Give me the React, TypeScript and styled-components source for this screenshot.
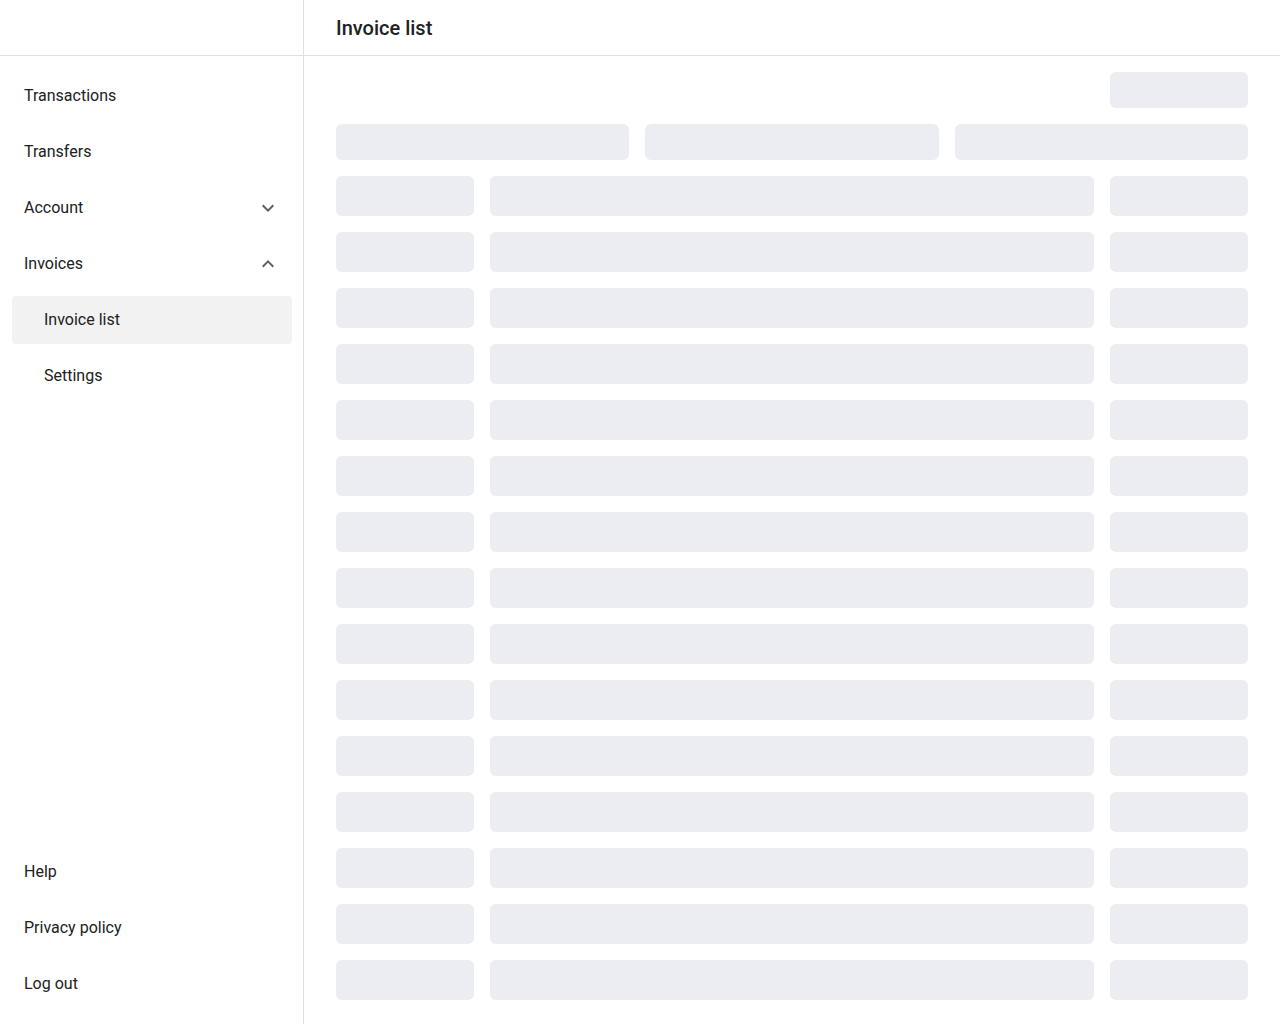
import React from 'react'
import styled, { createGlobalStyle } from 'styled-components'

const GlobalStyle = createGlobalStyle`
  html, body {
    margin: 0;
    padding: 0;
    background: #ffffff;
  }
  body {
    font-family: Roboto, 'Liberation Sans', Arial, sans-serif;
    color: #212121;
  }
  * {
    box-sizing: border-box;
  }
`

const Layout = styled.div`
  display: flex;
  height: 1024px;
  overflow: hidden;
`

const Sidebar = styled.aside`
  width: 304px;
  flex-shrink: 0;
  border-right: 1px solid #e0e0e0;
  display: flex;
  flex-direction: column;
`

const SidebarHeader = styled.div`
  height: 56px;
  border-bottom: 1px solid #e0e0e0;
`

const NavList = styled.nav`
  display: flex;
  flex-direction: column;
  gap: 8px;
  padding: 16px 11px 16px 12px;
`

const NavItem = styled.div<{ $sub?: boolean; $active?: boolean }>`
  height: 48px;
  display: flex;
  align-items: center;
  justify-content: space-between;
  padding: 0 12px 0 ${p => (p.$sub ? '32px' : '12px')};
  border-radius: 4px;
  background: ${p => (p.$active ? '#f2f2f2' : 'transparent')};
  font-size: 16px;
  line-height: 24px;
  color: #212121;
  cursor: pointer;
`

const Spacer = styled.div`
  flex: 1;
`

const Chevron = styled.svg`
  width: 24px;
  height: 24px;
  fill: #616161;
`

const Main = styled.main`
  flex: 1;
  display: flex;
  flex-direction: column;
  min-width: 0;
`

const Header = styled.header`
  height: 56px;
  border-bottom: 1px solid #e0e0e0;
  display: flex;
  align-items: center;
  padding: 0 32px;
`

const Title = styled.h1`
  margin: 0;
  font-size: 20px;
  font-weight: 500;
  color: #212121;
`

const Content = styled.div`
  padding: 16px 32px 24px;
  display: flex;
  flex-direction: column;
  gap: 16px;
`

const Skeleton = styled.div<{ $h: number }>`
  height: ${p => p.$h}px;
  background: #ecedf2;
  border-radius: 6px;
`

const ActionRow = styled.div`
  display: flex;
  justify-content: flex-end;
`

const ActionSkeleton = styled(Skeleton)`
  width: 138px;
`

const FilterRow = styled.div`
  display: grid;
  grid-template-columns: repeat(3, 1fr);
  gap: 16px;
`

const TableRow = styled.div`
  display: grid;
  grid-template-columns: 138px 1fr 138px;
  gap: 16px;
`

const ChevronDown = () => (
  <Chevron viewBox="0 0 24 24">
    <path d="M16.59 8.59 12 13.17 7.41 8.59 6 10l6 6 6-6z" />
  </Chevron>
)

const ChevronUp = () => (
  <Chevron viewBox="0 0 24 24">
    <path d="M12 8l-6 6 1.41 1.41L12 10.83l4.59 4.58L18 14z" />
  </Chevron>
)

const rows = Array.from({ length: 15 }, (_, i) => i)

export default function App() {
  return (
    <>
      <GlobalStyle />
      <Layout>
        <Sidebar>
          <SidebarHeader />
          <NavList>
            <NavItem>Transactions</NavItem>
            <NavItem>Transfers</NavItem>
            <NavItem>
              Account
              <ChevronDown />
            </NavItem>
            <NavItem>
              Invoices
              <ChevronUp />
            </NavItem>
            <NavItem $sub $active>Invoice list</NavItem>
            <NavItem $sub>Settings</NavItem>
          </NavList>
          <Spacer />
          <NavList>
            <NavItem>Help</NavItem>
            <NavItem>Privacy policy</NavItem>
            <NavItem>Log out</NavItem>
          </NavList>
        </Sidebar>
        <Main>
          <Header>
            <Title>Invoice list</Title>
          </Header>
          <Content>
            <ActionRow>
              <ActionSkeleton $h={36} />
            </ActionRow>
            <FilterRow>
              <Skeleton $h={36} />
              <Skeleton $h={36} />
              <Skeleton $h={36} />
            </FilterRow>
            {rows.map(i => (
              <TableRow key={i}>
                <Skeleton $h={40} />
                <Skeleton $h={40} />
                <Skeleton $h={40} />
              </TableRow>
            ))}
          </Content>
        </Main>
      </Layout>
    </>
  )
}
